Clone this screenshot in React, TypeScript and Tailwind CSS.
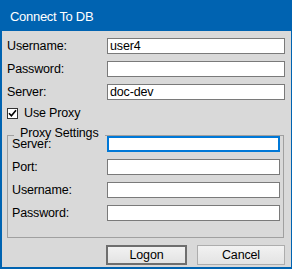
import React from "react";

function Field({ label, value, labelW, inputW, focused }: { label: string; value?: string; labelW: string; inputW: string; focused?: boolean }) {
  return (
    <div className="relative flex h-[16px] items-center">
      <div className={`${labelW} leading-[11px]`}>{label}</div>
      <div
        className={`${inputW} h-[16px] bg-white ${focused ? "border-2 border-[#0078d7]" : "border border-[#7a7a7a]"} pl-[2px] leading-[14px] overflow-hidden whitespace-nowrap`}
      >
        {value}
      </div>
    </div>
  );
}

export default function App() {
  return (
    <div className="flex h-[269px] w-[292px] flex-col bg-[#0063b1] pb-[2px] pl-[2px] pr-[1px] font-['Liberation_Sans',Arial,sans-serif] text-[12.5px] tracking-[-0.15px] text-black">
      <div className="flex h-[31px] items-center pl-[8px] pt-[2px] text-[13px] tracking-[-0.3px] text-white">
        Connect To DB
      </div>
      <div className="flex flex-1 flex-col bg-[#d9d9d9] pl-[5px] pt-[7px]">
        <div className="flex flex-col gap-[7px]">
          <Field label="Username:" value="user4" labelW="w-[100px]" inputW="w-[178px]" />
          <Field label="Password:" labelW="w-[100px]" inputW="w-[178px]" />
          <Field label="Server:" value="doc-dev" labelW="w-[100px]" inputW="w-[178px]" />
        </div>
        <div className="mt-[8px] flex h-[11px] items-center">
          <div className="flex h-[11px] w-[11px] items-center justify-center border border-[#333333] bg-white">
            <svg width="9" height="9" viewBox="0 0 9 9">
              <path d="M1 4.2 L3.4 6.8 L8 1.2" fill="none" stroke="#000" strokeWidth="1.6" />
            </svg>
          </div>
          <span className="ml-[6px] leading-[11px]">Use Proxy</span>
        </div>
        <div className="relative mt-[16px] flex w-[277px] flex-col gap-[7px] border border-[#a0a0a0] pb-[16px] pl-[4px] pr-[2px]">
          <span className="absolute left-[6px] top-[-8px] bg-[#d9d9d9] px-[6px] leading-[10px]">Proxy Settings</span>
          <Field label="Server:" labelW="w-[95px]" inputW="w-[173px]" focused />
          <Field label="Port:" labelW="w-[95px]" inputW="w-[173px]" />
          <Field label="Username:" labelW="w-[95px]" inputW="w-[173px]" />
          <Field label="Password:" labelW="w-[95px]" inputW="w-[173px]" />
        </div>
        <div className="mt-[7px] flex">
          <button className="ml-[99px] h-[20px] w-[81px] border-2 border-[#6e6e6e] bg-linear-to-b from-[#f2f2f2] to-[#e3e3e3] leading-[16px]">
            Logon
          </button>
          <button className="ml-[10px] h-[20px] w-[88px] border border-[#adadad] bg-linear-to-b from-[#f2f2f2] to-[#e3e3e3] leading-[18px]">
            Cancel
          </button>
        </div>
      </div>
    </div>
  );
}
